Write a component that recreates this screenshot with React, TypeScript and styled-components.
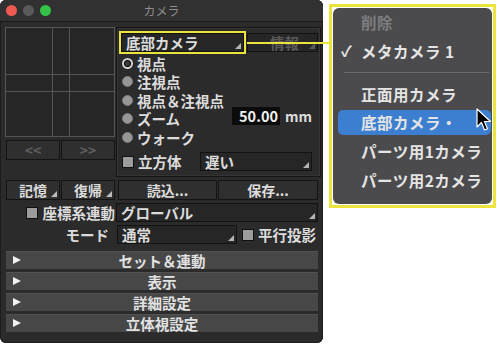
import React from 'react';
import styled, { createGlobalStyle } from 'styled-components';

const YELLOW = '#ebe43c';
const TEXT = '#dcdcdc';

const GlobalStyle = createGlobalStyle`
  body {
    margin: 0;
    background: #ffffff;
    font-family: "Noto Sans CJK JP", "Noto Sans", sans-serif;
  }
`;

const Stage = styled.div`
  position: relative;
  width: 500px;
  height: 344px;
  display: flex;
  align-items: flex-start;
  overflow: hidden;
`;

const Window = styled.div`
  width: 323px;
  height: 343px;
  background: #2b2b2b;
  border-radius: 6px;
  overflow: hidden;
  display: flex;
  flex-direction: column;
  box-shadow: inset 0 0 0 1px #1d1d1d;
`;

const TitleBar = styled.div`
  height: 22px;
  flex: none;
  display: flex;
  align-items: center;
  padding-left: 6px;
  background: #313131;
  border-bottom: 1px solid #1b1b1b;
  box-sizing: border-box;
  position: relative;
`;

const Light = styled.span<{ $color: string }>`
  width: 11px;
  height: 11px;
  border-radius: 50%;
  background: ${({ $color }) => $color};
  margin-right: 6px;
`;

const Title = styled.div`
  position: absolute;
  left: 0;
  right: 0;
  text-align: center;
  font-size: 12px;
  line-height: 16px;
  color: #8e8e8e;
  pointer-events: none;
`;

const Body = styled.div`
  padding: 5px 5px 0 5px;
  display: flex;
  flex-direction: column;
  color: ${TEXT};
  font-size: 14.5px;
  line-height: 17px;
  font-weight: bold;
`;

const TopSection = styled.div`
  display: flex;
  gap: 1px;
  margin-right: -3px;
`;

const LeftCol = styled.div`
  width: 111px;
  display: flex;
  flex-direction: column;
  gap: 3px;
`;

const Preview = styled.div`
  height: 110px;
  display: grid;
  grid-template-columns: 46px 16px 1fr;
  grid-template-rows: 46px 16px 1fr;
  gap: 1px;
  background: #555;
  border: 1px solid #555;
  box-sizing: border-box;
`;

const Cell = styled.div`
  background: #262626;
`;

const NavRow = styled.div`
  display: flex;
  gap: 1px;
  padding-left: 1px;
`;

const Button = styled.div<{ $w: number; $disabled?: boolean; $corner?: boolean }>`
  position: relative;
  width: ${({ $w }) => $w}px;
  height: 20px;
  box-sizing: border-box;
  display: flex;
  align-items: center;
  justify-content: center;
  background: #2f2f2f;
  border: 1px solid #141414;
  color: ${({ $disabled }) => ($disabled ? '#5c5c5c' : TEXT)};
  font-size: 14px;
  &::after {
    content: '';
    display: ${({ $corner }) => ($corner ? 'block' : 'none')};
    position: absolute;
    right: 2px;
    bottom: 2px;
    border-left: 6px solid transparent;
    border-bottom: 6px solid #bdbdbd;
  }
`;

const GroupBox = styled.div`
  flex: 1;
  height: 150px;
  box-sizing: border-box;
  border: 1px solid #161616;
  box-shadow: inset 0 0 0 1px #353535;
  padding: 3px 2px 0 2px;
  display: flex;
  flex-direction: column;
`;

const SelectRow = styled.div`
  display: flex;
  align-items: center;
  gap: 1px;
`;

const Highlight = styled.div`
  border: 2px solid ${YELLOW};
  height: 23px;
  box-sizing: border-box;
  display: flex;
`;

const Select = styled.div<{ $w: number; $disabled?: boolean }>`
  position: relative;
  width: ${({ $w }) => $w}px;
  height: 19px;
  box-sizing: border-box;
  background: #262626;
  border: 1px solid #131313;
  padding-left: 4px;
  display: flex;
  align-items: center;
  color: ${({ $disabled }) => ($disabled ? '#595959' : TEXT)};
  justify-content: ${({ $disabled }) => ($disabled ? 'center' : 'flex-start')};
  font-size: 14.5px;
  white-space: nowrap;
  &::after {
    content: '';
    position: absolute;
    right: 2px;
    bottom: 2px;
    border-left: 6px solid transparent;
    border-bottom: 6px solid ${({ $disabled }) => ($disabled ? '#5a5a5a' : '#b5b5b5')};
  }
`;

const RadioArea = styled.div`
  display: flex;
`;

const RadioList = styled.div`
  display: flex;
  flex-direction: column;
`;

const RadioRow = styled.div`
  height: 18.5px;
  display: flex;
  align-items: center;
  gap: 4px;
  padding-left: 3px;
  white-space: nowrap;
`;

const Radio = styled.span<{ $on?: boolean }>`
  width: 11px;
  height: 11px;
  flex: none;
  border-radius: 50%;
  box-sizing: border-box;
  background: ${({ $on }) => ($on ? '#3a3a3a' : '#979797')};
  border: ${({ $on }) => ($on ? '2px solid #d0d0d0' : '1px solid #7c7c7c')};
  box-shadow: ${({ $on }) => ($on ? 'inset 0 0 0 1px #000' : 'none')};
`;

const FocalWrap = styled.div`
  margin-left: auto;
  padding-top: 53px;
  padding-right: 6px;
  display: flex;
  align-items: flex-start;
  gap: 5px;
`;

const NumField = styled.div`
  width: 48px;
  height: 18px;
  background: #0b0b0b;
  color: #f0f0f0;
  font-size: 14.5px;
  line-height: 18px;
  text-align: right;
  padding-right: 2px;
  box-sizing: border-box;
`;

const Unit = styled.span`
  font-size: 14px;
  line-height: 18px;
`;

const CubeRow = styled.div`
  margin-top: 5.5px;
  display: flex;
  align-items: center;
  gap: 4px;
  padding-left: 3px;
`;

const CubeLabel = styled.span`
  width: 58px;
`;

const Check = styled.span`
  width: 10px;
  height: 10px;
  flex: none;
  background: #9c9c9c;
  border: 1px solid #111;
`;

const ButtonRow = styled.div`
  margin-top: 3px;
  display: flex;
  padding-left: 1px;
  gap: 1px;
`;

const FormRow = styled.div<{ $mt: number }>`
  margin-top: ${({ $mt }) => $mt}px;
  display: flex;
  align-items: center;
`;

const Label = styled.div<{ $pr?: number }>`
  width: 111px;
  display: flex;
  align-items: center;
  justify-content: flex-end;
  gap: 5px;
  padding-right: ${({ $pr }) => $pr ?? 1}px;
  box-sizing: border-box;
  white-space: nowrap;
`;

const SideCheck = styled.div`
  display: flex;
  align-items: center;
  gap: 4px;
  margin-left: 5px;
  white-space: nowrap;
`;

const Sections = styled.div`
  margin-top: 7px;
  display: flex;
  flex-direction: column;
  gap: 3px;
  padding-left: 1px;
`;

const SectionBar = styled.div`
  position: relative;
  width: 312px;
  height: 18px;
  box-sizing: border-box;
  background: #474747;
  border-top: 1px solid #525252;
  display: flex;
  align-items: center;
  justify-content: center;
  font-size: 14.5px;
  color: #e2e2e2;
  &::before {
    content: '';
    position: absolute;
    left: 7px;
    top: 4px;
    border-top: 4.5px solid transparent;
    border-bottom: 4.5px solid transparent;
    border-left: 8px solid #f2f2f2;
  }
`;

const PopupFrame = styled.div`
  margin: 4px 0 0 6px;
  width: 167px;
  height: 204px;
  box-sizing: border-box;
  border: 3px solid ${YELLOW};
  padding: 1px;
  background: #ffffff;
  display: flex;
`;

const Menu = styled.div`
  flex: 1;
  background: #4b4b4d;
  border-radius: 6px;
  display: flex;
  flex-direction: column;
  padding-bottom: 10px;
  font-size: 15.5px;
  line-height: 20px;
  font-weight: bold;
  letter-spacing: 0.5px;
  color: #e4e4e4;
`;

const MenuItem = styled.div<{ $active?: boolean; $disabled?: boolean }>`
  height: 29px;
  display: flex;
  align-items: center;
  position: relative;
  padding-left: 28px;
  color: ${({ $disabled }) => ($disabled ? '#7d7d7f' : '#e4e4e4')};
  white-space: nowrap;
  &::before {
    content: '';
    display: ${({ $active }) => ($active ? 'block' : 'none')};
    position: absolute;
    left: 5px;
    right: 1px;
    top: 2px;
    bottom: 2px;
    background: #3c7fd0;
    border-radius: 5px;
  }
`;

const ItemText = styled.span`
  position: relative;
`;

const CheckMark = styled.span`
  position: absolute;
  left: 8px;
  font-size: 15px;
`;

const Separator = styled.div`
  height: 14px;
  display: flex;
  align-items: center;
  padding: 0 3px 0 11px;
  &::after {
    content: '';
    flex: 1;
    height: 1px;
    background: #6a6a6c;
  }
`;

const Connector = styled.div`
  position: absolute;
  left: 247px;
  top: 42px;
  width: 83px;
  height: 2px;
  background: ${YELLOW};
`;

const Cursor = styled.svg`
  position: absolute;
  left: 476px;
  top: 108px;
`;

const sections = ['セット＆連動', '表示', '詳細設定', '立体視設定'];
const radios = ['視点', '注視点', '視点＆注視点', 'ズーム', 'ウォーク'];

export default function App() {
  return (
    <>
      <GlobalStyle />
      <Stage>
        <Window>
          <TitleBar>
            <Light $color="#ee5a52" />
            <Light $color="#5a5a5a" />
            <Light $color="#35c248" />
            <Title>カメラ</Title>
          </TitleBar>
          <Body>
            <TopSection>
              <LeftCol>
                <Preview>
                  {Array.from({ length: 9 }).map((_, i) => (
                    <Cell key={i} />
                  ))}
                </Preview>
                <NavRow>
                  <Button $w={54} $disabled>&lt;&lt;</Button>
                  <Button $w={54} $disabled>&gt;&gt;</Button>
                </NavRow>
              </LeftCol>
              <GroupBox>
                <SelectRow>
                  <Highlight>
                    <Select $w={123}>底部カメラ</Select>
                  </Highlight>
                  <Select $w={71} $disabled>情報</Select>
                </SelectRow>
                <RadioArea>
                  <RadioList>
                    {radios.map((r, i) => (
                      <RadioRow key={r}>
                        <Radio $on={i === 0} />
                        {r}
                      </RadioRow>
                    ))}
                  </RadioList>
                  <FocalWrap>
                    <NumField>50.00</NumField>
                    <Unit>mm</Unit>
                  </FocalWrap>
                </RadioArea>
                <CubeRow>
                  <Check />
                  <CubeLabel>立方体</CubeLabel>
                  <Select $w={112}>遅い</Select>
                </CubeRow>
              </GroupBox>
            </TopSection>
            <ButtonRow>
              <Button $w={54} $corner>記憶</Button>
              <Button $w={54} $corner>復帰</Button>
              <Button $w={99} style={{ marginLeft: 2 }}>読込...</Button>
              <Button $w={100}>保存...</Button>
            </ButtonRow>
            <FormRow $mt={3}>
              <Label>
                <Check />
                座標系連動
              </Label>
              <Select $w={202}>グローバル</Select>
            </FormRow>
            <FormRow $mt={3}>
              <Label $pr={7}>モード</Label>
              <Select $w={120} style={{ marginLeft: 1 }}>通常</Select>
              <SideCheck>
                <Check />
                平行投影
              </SideCheck>
            </FormRow>
            <Sections>
              {sections.map((s) => (
                <SectionBar key={s}>{s}</SectionBar>
              ))}
            </Sections>
          </Body>
        </Window>
        <PopupFrame>
          <Menu>
            <MenuItem $disabled>
              <ItemText>削除</ItemText>
            </MenuItem>
            <MenuItem>
              <CheckMark>✓</CheckMark>
              <ItemText>メタカメラ 1</ItemText>
            </MenuItem>
            <Separator />
            <MenuItem>
              <ItemText>正面用カメラ</ItemText>
            </MenuItem>
            <MenuItem $active>
              <ItemText>底部カメラ・</ItemText>
            </MenuItem>
            <MenuItem>
              <ItemText>パーツ用1カメラ</ItemText>
            </MenuItem>
            <MenuItem>
              <ItemText>パーツ用2カメラ</ItemText>
            </MenuItem>
          </Menu>
        </PopupFrame>
        <Connector />
        <Cursor width="16" height="25" viewBox="0 0 16 25">
          <path
            d="M1 1 L1 19 L5.5 14.5 L8.5 22 L11.5 20.8 L8.5 13.5 L14.5 13.5 Z"
            fill="#000"
            stroke="#fff"
            strokeWidth="1.2"
            strokeLinejoin="round"
          />
        </Cursor>
      </Stage>
    </>
  );
}
